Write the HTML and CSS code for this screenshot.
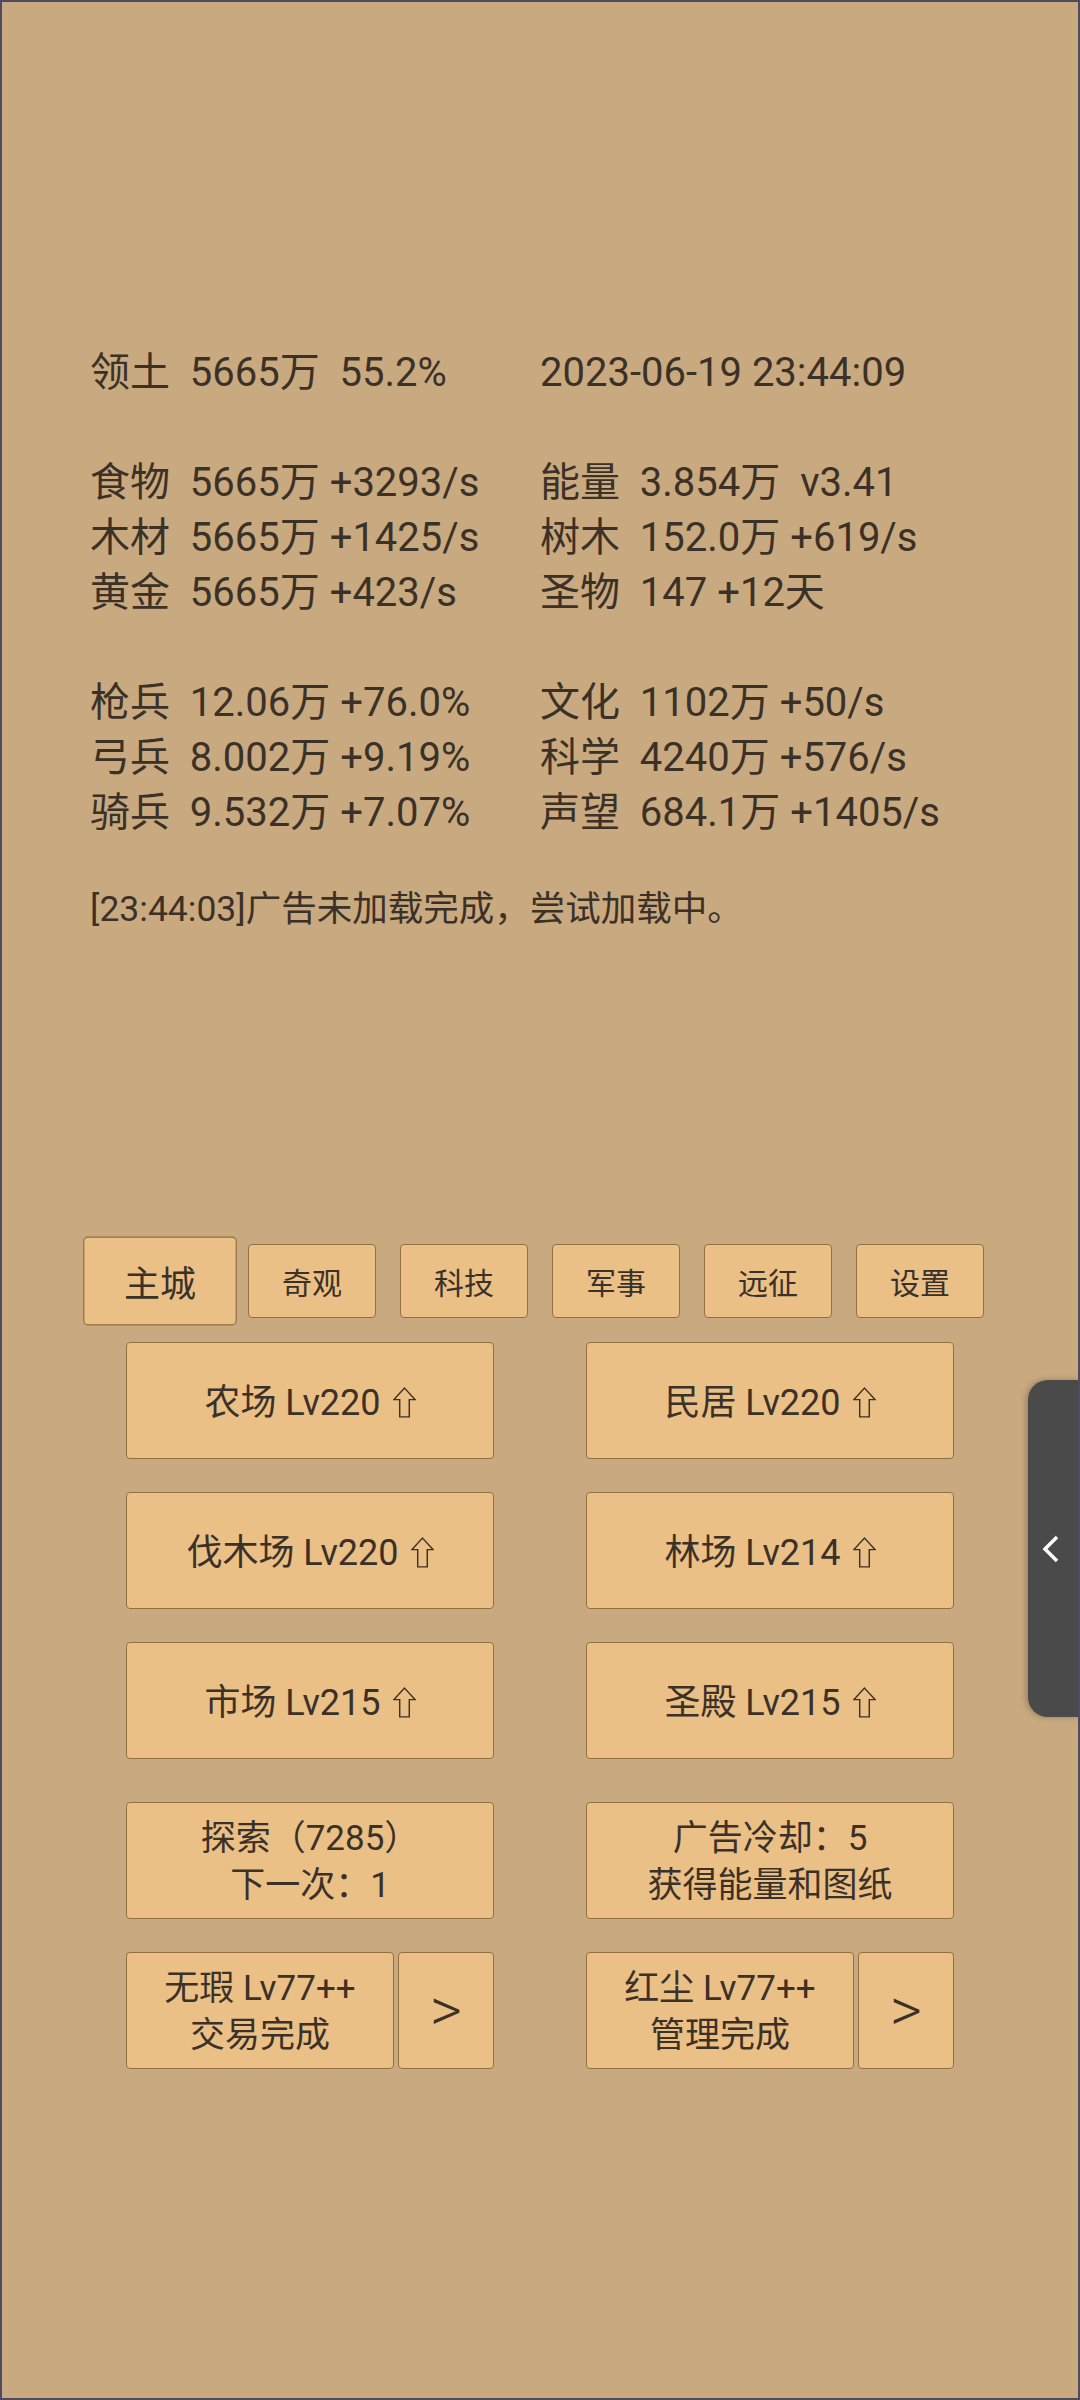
FILE: index.html
```html
<!DOCTYPE html>
<html lang="zh-CN">
<head>
    <meta charset="UTF-8">
    <meta name="viewport" content="width=device-width, initial-scale=1.0">
    <title>主城</title>
    <link rel="stylesheet" href="styles.css">
</head>
<body>
    <section class="stats">
        <div class="row"><span class="cell">领土  5665万  55.2%</span><span class="cell">2023-06-19 23:44:09</span></div>
        <div class="row"></div>
        <div class="row"><span class="cell">食物  5665万 +3293/s</span><span class="cell">能量  3.854万  v3.41</span></div>
        <div class="row"><span class="cell">木材  5665万 +1425/s</span><span class="cell">树木  152.0万 +619/s</span></div>
        <div class="row"><span class="cell">黄金  5665万 +423/s</span><span class="cell">圣物  147 +12天</span></div>
        <div class="row"></div>
        <div class="row"><span class="cell">枪兵  12.06万 +76.0%</span><span class="cell">文化  1102万 +50/s</span></div>
        <div class="row"><span class="cell">弓兵  8.002万 +9.19%</span><span class="cell">科学  4240万 +576/s</span></div>
        <div class="row"><span class="cell">骑兵  9.532万 +7.07%</span><span class="cell">声望  684.1万 +1405/s</span></div>
    </section>

    <p class="log">[23:44:03]广告未加载完成，尝试加载中。</p>

    <nav class="tabs">
        <button class="tab active">主城</button>
        <button class="tab">奇观</button>
        <button class="tab">科技</button>
        <button class="tab">军事</button>
        <button class="tab">远征</button>
        <button class="tab">设置</button>
    </nav>

    <section class="buildings">
        <button class="btn">农场 Lv220<svg class="up" viewBox="0 0 24 32"><path d="M12 1 L23 13 L17 13 L17 31 L7 31 L7 13 L1 13 Z"/></svg></button>
        <button class="btn">民居 Lv220<svg class="up" viewBox="0 0 24 32"><path d="M12 1 L23 13 L17 13 L17 31 L7 31 L7 13 L1 13 Z"/></svg></button>
        <button class="btn">伐木场 Lv220<svg class="up" viewBox="0 0 24 32"><path d="M12 1 L23 13 L17 13 L17 31 L7 31 L7 13 L1 13 Z"/></svg></button>
        <button class="btn">林场 Lv214<svg class="up" viewBox="0 0 24 32"><path d="M12 1 L23 13 L17 13 L17 31 L7 31 L7 13 L1 13 Z"/></svg></button>
        <button class="btn">市场 Lv215<svg class="up" viewBox="0 0 24 32"><path d="M12 1 L23 13 L17 13 L17 31 L7 31 L7 13 L1 13 Z"/></svg></button>
        <button class="btn">圣殿 Lv215<svg class="up" viewBox="0 0 24 32"><path d="M12 1 L23 13 L17 13 L17 31 L7 31 L7 13 L1 13 Z"/></svg></button>
    </section>

    <section class="actions">
        <button class="btn two-line">探索（7285）<br>下一次：1</button>
        <button class="btn two-line">广告冷却：5<br>获得能量和图纸</button>
        <div class="pair">
            <button class="btn two-line">无瑕 Lv77++<br>交易完成</button>
            <button class="btn next">&gt;</button>
        </div>
        <div class="pair">
            <button class="btn two-line">红尘 Lv77++<br>管理完成</button>
            <button class="btn next">&gt;</button>
        </div>
    </section>

    <button class="drawer-handle">
        <svg viewBox="0 0 20 30"><polyline points="16,3 4,15 16,27"/></svg>
    </button>
</body>
</html>
```

FILE: styles.css
```css
html, body {
    margin: 0;
    padding: 0;
}

body {
    position: relative;
    width: 1080px;
    height: 2400px;
    box-sizing: border-box;
    border: 2px solid #4e4c5e;
    background: #c9aa80;
    color: #3b3127;
    font-family: Roboto, "Noto Sans CJK SC", sans-serif;
    overflow: hidden;
}

.stats {
    padding: 343px 0 0 88px;
    font-size: 40px;
    line-height: 55px;
}

.row {
    display: flex;
    height: 55px;
}

.cell {
    width: 450px;
    white-space: pre;
}

.log {
    margin: 47px 0 0 88px;
    font-size: 35.5px;
    line-height: 44px;
}

button {
    font-family: inherit;
    color: inherit;
    padding: 0;
    margin: 0;
    background: #eac087;
    border: 1px solid #93703f;
    border-radius: 4px;
    cursor: pointer;
}

.tabs {
    display: flex;
    justify-content: center;
    gap: 24px;
    margin-top: 313px;
}

.tab {
    width: 128px;
    height: 74px;
    font-size: 30px;
}

.tab.active {
    transform: scale(1.2);
}

.buildings, .actions {
    display: grid;
    grid-template-columns: 368px 368px;
    column-gap: 92px;
    row-gap: 33px;
    justify-content: center;
}

.buildings {
    margin-top: 24px;
}

.actions {
    margin-top: 43px;
}

.btn {
    height: 117px;
    font-size: 36px;
    padding-bottom: 3px;
}

.up {
    width: 23px;
    height: 33px;
    margin-left: 12px;
    vertical-align: -4px;
    fill: none;
    stroke: #3b3127;
    stroke-width: 1.5;
}

.two-line {
    font-size: 35px;
    line-height: 47px;
    padding: 3px 0 0;
}

.pair {
    display: flex;
    gap: 4px;
}

.pair .two-line {
    flex: 1;
}

.next {
    width: 96px;
    font-size: 62px;
    font-weight: 300;
}

.drawer-handle {
    position: absolute;
    top: 1378px;
    right: -2px;
    width: 52px;
    height: 337px;
    background: #4a4a4a;
    border: none;
    border-radius: 20px 0 0 20px;
    box-shadow: -2px 0 6px rgba(0, 0, 0, 0.25);
    display: flex;
    align-items: center;
    justify-content: center;
}

.drawer-handle svg {
    width: 20px;
    height: 30px;
    margin-right: 6px;
    fill: none;
    stroke: #ffffff;
    stroke-width: 3.5;
}
```
